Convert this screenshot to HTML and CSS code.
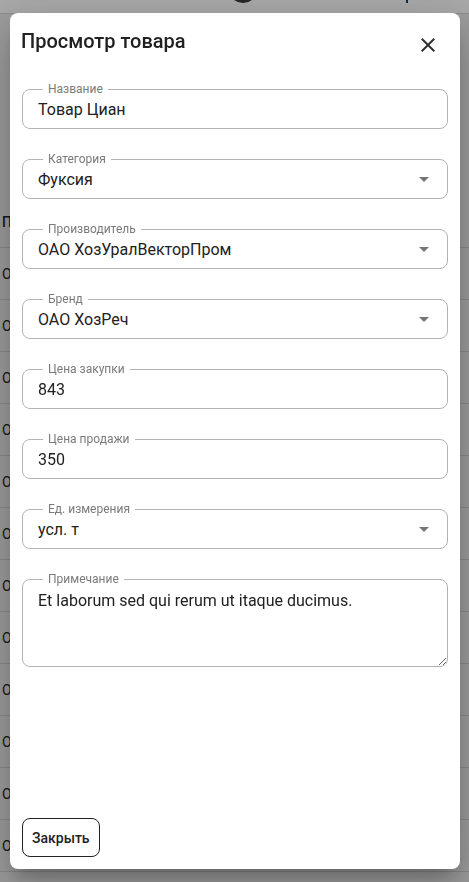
FILE: index.html
```html
<!DOCTYPE html>
<html>
<head>
  <title>Просмотр товара</title>
  <link rel="stylesheet" href="styles.css">
</head>
<body>
  <div class="page">
    <div class="topbar">
      <span class="avatar"></span>
      <span class="mark"></span>
    </div>

    <div class="grid">
      <div class="grid-row grid-head">П</div>
      <div class="grid-row">О</div>
      <div class="grid-row">О</div>
      <div class="grid-row">О</div>
      <div class="grid-row">О</div>
      <div class="grid-row">О</div>
      <div class="grid-row">О</div>
      <div class="grid-row">О</div>
      <div class="grid-row">О</div>
      <div class="grid-row">О</div>
      <div class="grid-row">О</div>
      <div class="grid-row">О</div>
      <div class="grid-row">О</div>
    </div>
  </div>

  <div class="backdrop"></div>

  <div class="dialog">
    <div class="dialog-head">
      <h2 class="dialog-title">Просмотр товара</h2>
      <button class="icon-button" aria-label="close">
        <svg viewBox="0 0 24 24" width="24" height="24"><path d="M19 6.41 17.59 5 12 10.59 6.41 5 5 6.41 10.59 12 5 17.59 6.41 19 12 13.41 17.59 19 19 17.59 13.41 12z"/></svg>
      </button>
    </div>

    <div class="dialog-body">
      <!-- Text fields -->
      <div class="field">
        <label class="field-label">Название</label>
        <input class="field-input" type="text" value="Товар Циан" readonly>
      </div>

      <!-- Selects -->
      <div class="field">
        <label class="field-label">Категория</label>
        <div class="field-input field-select">
          <span>Фуксия</span>
          <svg viewBox="0 0 24 24" width="24" height="24"><path d="M7 10l5 5 5-5z"/></svg>
        </div>
      </div>

      <div class="field">
        <label class="field-label">Производитель</label>
        <div class="field-input field-select">
          <span>ОАО ХозУралВекторПром</span>
          <svg viewBox="0 0 24 24" width="24" height="24"><path d="M7 10l5 5 5-5z"/></svg>
        </div>
      </div>

      <div class="field">
        <label class="field-label">Бренд</label>
        <div class="field-input field-select">
          <span>ОАО ХозРеч</span>
          <svg viewBox="0 0 24 24" width="24" height="24"><path d="M7 10l5 5 5-5z"/></svg>
        </div>
      </div>

      <div class="field">
        <label class="field-label">Цена закупки</label>
        <input class="field-input" type="text" value="843" readonly>
      </div>

      <div class="field">
        <label class="field-label">Цена продажи</label>
        <input class="field-input" type="text" value="350" readonly>
      </div>

      <div class="field">
        <label class="field-label">Ед. измерения</label>
        <div class="field-input field-select">
          <span>усл. т</span>
          <svg viewBox="0 0 24 24" width="24" height="24"><path d="M7 10l5 5 5-5z"/></svg>
        </div>
      </div>

      <!-- Note -->
      <div class="field">
        <label class="field-label">Примечание</label>
        <textarea class="field-input field-area" readonly>Et laborum sed qui rerum ut itaque ducimus.</textarea>
      </div>
    </div>

    <div class="dialog-actions">
      <button class="outline-button">Закрыть</button>
    </div>
  </div>
</body>
</html>
```

FILE: styles.css
```css
* {
  box-sizing: border-box;
}

body {
  margin: 0;
  width: 469px;
  height: 882px;
  overflow: hidden;
  font-family: Roboto, "Noto Sans", sans-serif;
  background-color: #eeeeee;
  color: #212121;
}

/* Page behind the dialog */
.topbar {
  display: flex;
  height: 14px;
  overflow: hidden;
  background-color: #ffffff;
  border-bottom: 1px solid #d6d6d6;
}

.avatar {
  flex: none;
  width: 30px;
  height: 30px;
  margin: -27px 0 0 228px;
  border-radius: 50%;
  background-color: #3a3a3a;
}

.mark {
  flex: none;
  width: 2px;
  height: 3px;
  margin-left: 148px;
  background-color: #0f4c5c;
}

.grid {
  margin-top: 182px;
}

.grid-row {
  display: flex;
  align-items: center;
  height: 52px;
  padding-left: 2px;
  border-bottom: 1px solid #d2d2d2;
  font-size: 14px;
  color: #222;
  white-space: nowrap;
}

.grid-head {
  font-weight: 500;
}

.backdrop {
  position: fixed;
  inset: 0;
  background-color: rgba(0, 0, 0, 0.34);
}

/* Dialog */
.dialog {
  position: fixed;
  left: 10px;
  top: 13px;
  width: 450px;
  height: 856px;
  display: flex;
  flex-direction: column;
  background-color: #ffffff;
  border-radius: 8px;
  box-shadow: 0 11px 15px -7px rgba(0,0,0,0.2), 0 24px 38px 3px rgba(0,0,0,0.14), 0 9px 46px 8px rgba(0,0,0,0.12);
}

.dialog-head {
  display: flex;
  justify-content: space-between;
  align-items: flex-start;
  padding: 12px 12px 0 11px;
}

.dialog-title {
  margin: 0;
  font-size: 20px;
  font-weight: 500;
  line-height: 32px;
  color: #212121;
}

.icon-button {
  width: 40px;
  height: 40px;
  padding: 8px;
  border: none;
  border-radius: 50%;
  background: transparent;
  cursor: pointer;
}

.icon-button svg {
  display: block;
  fill: #303030;
}

.dialog-body {
  display: flex;
  flex-direction: column;
  gap: 30px;
  margin-top: 24px;
  padding: 0 12px;
}

.field {
  position: relative;
}

/* Floating label sits on the top border */
.field-label {
  position: absolute;
  top: -8px;
  left: 21px;
  padding: 0 5px;
  background-color: #ffffff;
  font-size: 12px;
  line-height: 16px;
  color: #7a7a7a;
  z-index: 1;
}

.field-input {
  display: block;
  width: 100%;
  height: 40px;
  margin: 0;
  padding: 0 15px;
  border: 1px solid #b3b3b3;
  border-radius: 8px;
  background: #ffffff;
  font-family: Roboto, "Noto Sans", sans-serif;
  font-size: 16px;
  color: #212121;
  outline: none;
}

.field-select {
  display: flex;
  align-items: center;
  justify-content: space-between;
  padding-right: 11px;
}

.field-select svg {
  flex: none;
  fill: #757575;
}

.field-area {
  height: 88px;
  padding: 8.5px 15px;
  line-height: 23px;
  resize: vertical;
}

.dialog-actions {
  margin-top: auto;
  padding: 12px;
}

.outline-button {
  height: 39px;
  padding: 0 9px;
  border: 1px solid #222;
  border-radius: 8px;
  background-color: #ffffff;
  font-family: Roboto, "Noto Sans", sans-serif;
  font-size: 14px;
  font-weight: 500;
  color: #222;
  cursor: pointer;
}
```
